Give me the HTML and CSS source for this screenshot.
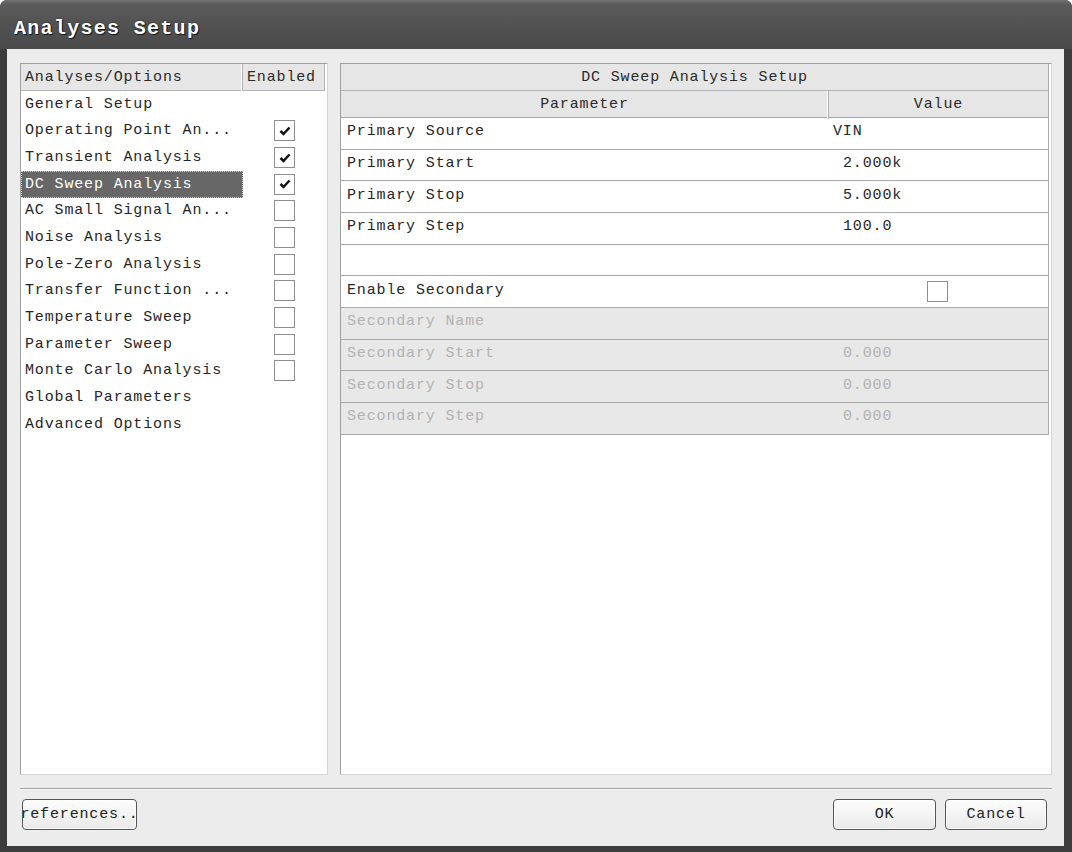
FILE: index.html
```html
<!DOCTYPE html>
<html>
<head>
<meta charset="utf-8">
<link rel="stylesheet" href="styles.css">
</head>
<body>
<div class="window">
  <div class="titlebar"><span class="title">Analyses Setup</span></div>
  <div class="frame">
    <div class="client">
      <div class="panels">
        <div class="panel left">
          <div class="lhead"><div class="lh-name">Analyses/Options</div><div class="lh-en">Enabled</div></div>
          <div class="litem"><span class="lname">General Setup</span><span class="len"></span></div>
          <div class="litem"><span class="lname">Operating Point An...</span><span class="len"><span class="cb"><svg width="14" height="12" viewBox="0 0 14 12"><path d="M2.5 6 L5.5 9 L11.5 2.5" fill="none" stroke="#111" stroke-width="2.5"/></svg></span></span></div>
          <div class="litem"><span class="lname">Transient Analysis</span><span class="len"><span class="cb"><svg width="14" height="12" viewBox="0 0 14 12"><path d="M2.5 6 L5.5 9 L11.5 2.5" fill="none" stroke="#111" stroke-width="2.5"/></svg></span></span></div>
          <div class="litem sel"><span class="lname">DC Sweep Analysis</span><span class="len"><span class="cb"><svg width="14" height="12" viewBox="0 0 14 12"><path d="M2.5 6 L5.5 9 L11.5 2.5" fill="none" stroke="#111" stroke-width="2.5"/></svg></span></span></div>
          <div class="litem"><span class="lname">AC Small Signal An...</span><span class="len"><span class="cb"></span></span></div>
          <div class="litem"><span class="lname">Noise Analysis</span><span class="len"><span class="cb"></span></span></div>
          <div class="litem"><span class="lname">Pole-Zero Analysis</span><span class="len"><span class="cb"></span></span></div>
          <div class="litem"><span class="lname">Transfer Function ...</span><span class="len"><span class="cb"></span></span></div>
          <div class="litem"><span class="lname">Temperature Sweep</span><span class="len"><span class="cb"></span></span></div>
          <div class="litem"><span class="lname">Parameter Sweep</span><span class="len"><span class="cb"></span></span></div>
          <div class="litem"><span class="lname">Monte Carlo Analysis</span><span class="len"><span class="cb"></span></span></div>
          <div class="litem"><span class="lname">Global Parameters</span><span class="len"></span></div>
          <div class="litem"><span class="lname">Advanced Options</span><span class="len"></span></div>
        </div>
        <div class="panel right">
          <div class="rtitle">DC Sweep Analysis Setup</div>
          <div class="rhead"><div class="rh-param">Parameter</div><div class="rh-val">Value</div></div>
          <div class="prow"><div class="pname">Primary Source</div><div class="pval vin">VIN</div></div>
          <div class="prow"><div class="pname">Primary Start</div><div class="pval">2.000k</div></div>
          <div class="prow"><div class="pname">Primary Stop</div><div class="pval">5.000k</div></div>
          <div class="prow"><div class="pname">Primary Step</div><div class="pval">100.0</div></div>
          <div class="prow"><div class="pname"></div><div class="pval"></div></div>
          <div class="prow"><div class="pname">Enable Secondary</div><div class="pval pcb"><span class="cb"></span></div></div>
          <div class="prow dis"><div class="pname">Secondary Name</div><div class="pval"></div></div>
          <div class="prow dis"><div class="pname">Secondary Start</div><div class="pval">0.000</div></div>
          <div class="prow dis"><div class="pname">Secondary Stop</div><div class="pval">0.000</div></div>
          <div class="prow dis"><div class="pname">Secondary Step</div><div class="pval">0.000</div></div>
        </div>
      </div>
      <div class="sep"></div>
      <div class="footer">
        <button class="btn pref"><span class="btxt">Preferences...</span></button>
        <div class="spacer"></div>
        <button class="btn ok">OK</button>
        <button class="btn cancel">Cancel</button>
      </div>
    </div>
  </div>
</div>
</body>
</html>
```

FILE: styles.css
```css
html, body {
  margin: 0;
  padding: 0;
  background: #ffffff;
}

.window {
  width: 1072px;
  height: 852px;
  display: flex;
  flex-direction: column;
  background: #3c3c3c;
  border-radius: 7px 7px 0 0;
  overflow: hidden;
  font-family: "Liberation Mono", "DejaVu Sans Mono", monospace;
  font-size: 15px;
  letter-spacing: 0.85px;
  color: #262626;
}

.titlebar {
  height: 49px;
  flex: none;
  box-sizing: border-box;
  padding: 8px 0 0 14px;
  display: flex;
  align-items: center;
  background: linear-gradient(#747474 0, #5c5c5c 4px, #525252 50%, #4a4a4a 100%);
}

.title {
  color: #ffffff;
  font-weight: bold;
  font-size: 20px;
  letter-spacing: 1.3px;
  text-shadow: 1px 1px 0 #1a1a1a, 0 0 2px #222;
}

.frame {
  flex: 1;
  display: flex;
  padding: 0 8px 6px 7px;
  background: #3c3c3c;
}

.client {
  flex: 1;
  display: flex;
  flex-direction: column;
  background: #ececec;
  padding: 14px 12px 0 13px;
}

.panels {
  display: flex;
  gap: 12px;
  height: 712px;
  flex: none;
}

.panel {
  background: #ffffff;
  border: 1px solid #a0a0a0;
  border-right-color: #d4d4d4;
  border-bottom-color: #d4d4d4;
  box-sizing: border-box;
}

.left {
  width: 308px;
  padding-right: 2px;
}

.right {
  flex: 1;
  padding-right: 2px;
}

/* left list */
.lhead {
  display: grid;
  grid-template-columns: 222px 1fr;
  height: 27px;
  box-sizing: border-box;
  background: #e6e6e6;
  border-bottom: 1px solid #b4b4b4;
  border-right: 1px solid #b4b4b4;
  color: #2a2a2a;
}

.lh-name {
  padding: 1px 0 0 4px;
  line-height: 26px;
  border-right: 1px solid #b0b0b0;
  box-shadow: inset -1px 0 #ffffff;
}

.lh-en {
  padding: 1px 0 0 4px;
  line-height: 26px;
}

.litem {
  display: grid;
  grid-template-columns: 222px 1fr;
  height: 26.67px;
}

.lname {
  display: flex;
  align-items: center;
  padding: 0 0 0 4px;
  box-sizing: border-box;
  white-space: nowrap;
}

.litem.sel .lname {
  background: #676767;
  color: #ffffff;
  outline: 1px dotted #d0d0d0;
  outline-offset: -1px;
}

.len {
  display: flex;
  align-items: center;
  justify-content: center;
  padding-left: 1px;
}

.cb {
  width: 21px;
  height: 21px;
  box-sizing: border-box;
  border: 1px solid #8e8e8e;
  background: #ffffff;
  display: flex;
  align-items: center;
  justify-content: center;
}

/* right table */
.rtitle {
  height: 27px;
  box-sizing: border-box;
  background: #e6e6e6;
  border-bottom: 1px solid #b4b4b4;
  border-right: 1px solid #a8a8a8;
  text-align: center;
  line-height: 28px;
  color: #2a2a2a;
}

.rhead {
  display: grid;
  grid-template-columns: 488px 1fr;
  height: 27px;
  box-sizing: border-box;
  background: #e6e6e6;
  border-bottom: 1px solid #a8a8a8;
  border-right: 1px solid #a8a8a8;
  color: #2a2a2a;
}

.rh-param {
  text-align: center;
  line-height: 28px;
  border-right: 1px solid #b0b0b0;
  box-shadow: inset -1px 0 #ffffff;
}

.rh-val {
  text-align: center;
  line-height: 28px;
}

.prow {
  display: grid;
  grid-template-columns: 488px 1fr;
  height: 31.67px;
  box-sizing: border-box;
  border-bottom: 1px solid #a8a8a8;
  border-right: 1px solid #a8a8a8;
  align-items: center;
}

.pname {
  padding: 0 0 3px 6px;
  white-space: nowrap;
}

.pval {
  padding: 0 0 3px 14px;
}

.pval.vin {
  padding-left: 4px;
}

.pval.pcb {
  padding: 0;
  display: flex;
  justify-content: center;
  padding-right: 3px;
}

.prow.dis {
  background: #e8e8e8;
  color: #b2b2b2;
}

/* footer */
.sep {
  margin-top: 13px;
  height: 1px;
  flex: none;
  background: #a4a4a4;
  box-shadow: 0 1px 0 #f8f8f8;
}

.footer {
  display: flex;
  gap: 9px;
  margin-top: 10px;
  padding: 0 5px 0 2px;
}

.spacer {
  flex: 1;
}

.btn {
  height: 31px;
  box-sizing: border-box;
  border: 1px solid #555555;
  border-radius: 4px;
  background: linear-gradient(#fdfdfd, #e9e9e9);
  box-shadow: inset 0 0 0 1px #ffffff;
  font-family: "Liberation Mono", "DejaVu Sans Mono", monospace;
  font-size: 15px;
  letter-spacing: 0.85px;
  color: #222222;
  padding: 0;
  margin: 0;
}

.pref {
  width: 115px;
  display: flex;
  align-items: center;
  justify-content: center;
  overflow: hidden;
}

.btxt {
  flex: none;
  white-space: nowrap;
}

.ok {
  width: 103px;
}

.cancel {
  width: 102px;
}
```
